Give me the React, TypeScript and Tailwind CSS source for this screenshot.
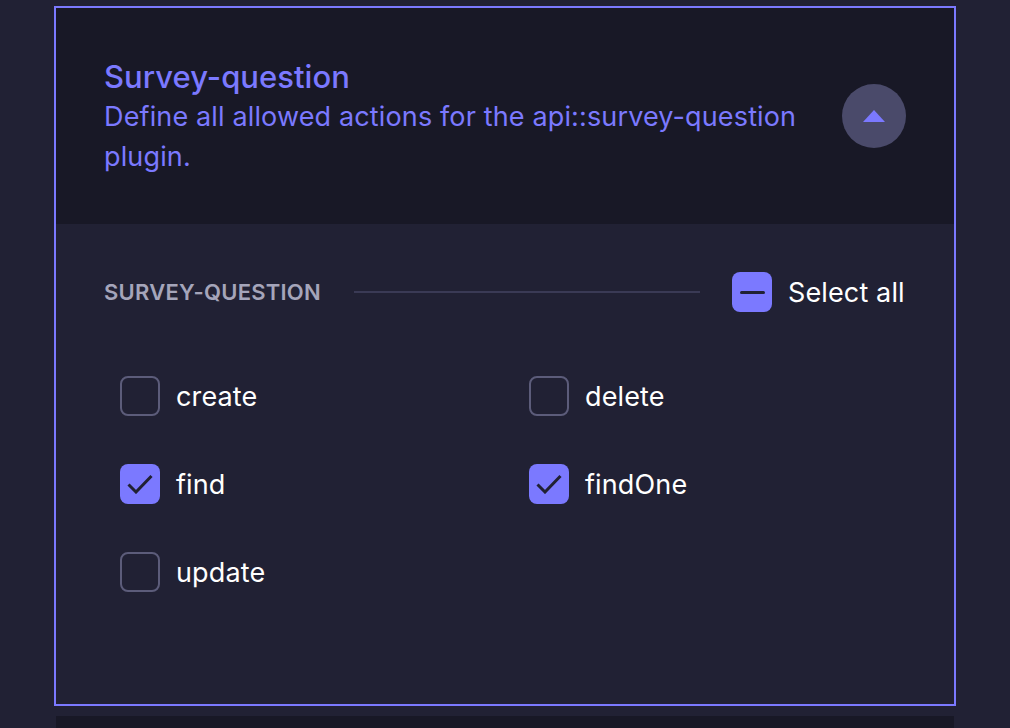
const actions = [
  { name: 'create', checked: false },
  { name: 'delete', checked: false },
  { name: 'find', checked: true },
  { name: 'findOne', checked: true },
  { name: 'update', checked: false },
];

function Checkbox({ checked, label }: { checked: boolean; label: string }) {
  return (
    <label className="flex h-10 items-center gap-4">
      {checked ? (
        <span className="flex h-10 w-10 items-center justify-center rounded-lg bg-[#7b79ff]">
          <svg width="26" height="20" viewBox="0 0 26 20" fill="none">
            <path d="M1.5 10.5 L9 18 L24.5 2" stroke="#212134" strokeWidth="3" />
          </svg>
        </span>
      ) : (
        <span className="h-10 w-10 rounded-lg border-2 border-[#5c5c7a] bg-[#212134]" />
      )}
      <span className="pt-[2px] text-[27px] leading-10 tracking-[0.13px] text-white">{label}</span>
    </label>
  );
}

export default function App() {
  return (
    <div className="h-[728px] w-[1010px] overflow-hidden bg-[#212134] pt-[6px] font-['Inter',sans-serif]">
      <div className="mx-[54px] h-[700px] border-2 border-[#7b79ff]">
        {/* Header */}
        <div className="flex h-[216px] items-center justify-between bg-[#181826] pl-[48px] pr-[48px]">
          <div className="w-[720px]">
            <h2 className="-mb-px text-[31px] leading-[42px] font-medium tracking-[0.03px] text-[#7b79ff]">Survey-question</h2>
            <p className="-mb-px text-[27px] leading-10 tracking-[0.14px] text-[#7b79ff]">
              Define all allowed actions for the api::survey-question plugin.
            </p>
          </div>
          <button className="flex h-16 w-16 items-center justify-center rounded-full bg-[#4a4a6a]">
            <svg width="22" height="12" viewBox="0 0 22 12">
              <path d="M11 0 L22 12 L0 12 Z" fill="#7b79ff" />
            </svg>
          </button>
        </div>

        {/* Body */}
        <div className="pl-[48px] pt-12">
          <div className="flex h-10 items-center">
            <span className="w-[218px] shrink-0 whitespace-nowrap text-[22px] font-semibold tracking-[0.25px] text-[#a5a5ba]">SURVEY-QUESTION</span>
            <div className="ml-8 h-[2px] w-[346px] bg-[#3a3a55]" />
            <div className="ml-8 flex items-center gap-4">
              <span className="flex h-10 w-10 items-center justify-center rounded-lg bg-[#7b79ff]">
                <span className="h-[3px] w-[25px] rounded-sm bg-[#212134]" />
              </span>
              <span className="whitespace-nowrap pt-[2px] text-[27px] leading-10 tracking-[0.13px] text-white">Select all</span>
            </div>
          </div>

          <div className="mt-16 grid grid-cols-[409px_1fr] gap-y-12 pl-4">
            {actions.map((a) => (
              <Checkbox key={a.name} checked={a.checked} label={a.name} />
            ))}
          </div>
        </div>
      </div>
      <div className="mx-14 mt-[10px] h-10 bg-[#181826]" />
    </div>
  );
}
